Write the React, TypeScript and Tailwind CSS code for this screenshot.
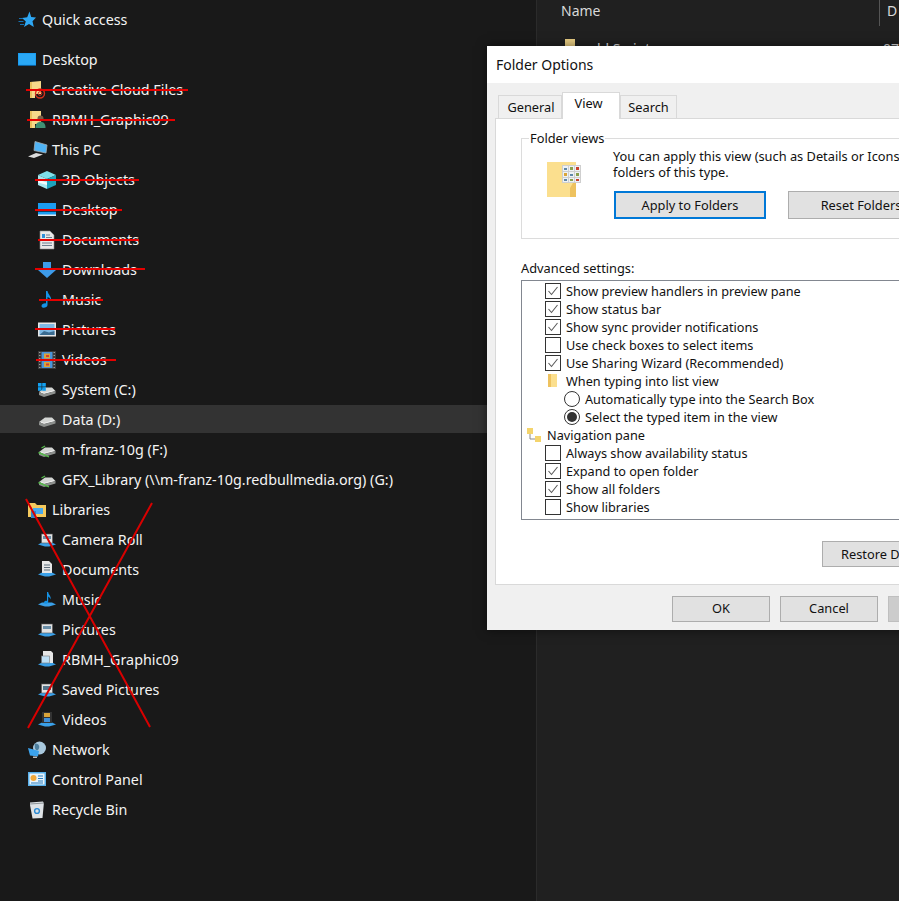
const FONT = "font-['Noto_Sans','Open_Sans',sans-serif]";

type IconName =
  | "star" | "desktop" | "folderCloud" | "folderUser" | "pc" | "cube" | "desktopSmall" | "doc" | "download"
  | "music" | "pictures" | "videos" | "driveWin" | "drive" | "driveNet" | "libraries" | "libRoll" | "libDoc"
  | "libMusic" | "libPic" | "libUser" | "libSaved" | "libVideo" | "network" | "control" | "bin";

function Tray() {
  return <path d="M0 13.5 L4 11.5 L14 11.5 L18 13.5 L11 15.5 L7 15.5 Z" fill="#3aa0e8" />;
}

function Drive() {
  return (
    <>
      <path d="M1 11 L7 6.5 L14 6.5 L17.5 10 L6 13 Z" fill="#d4d6d4" />
      <path d="M1 11 L6 13 L17.5 10 V12.5 L6 16 L1 14 Z" fill="#8d908e" />
      <path d="M3 11.2 L6.2 12.2 L16 9.6" stroke="#f4f4f4" strokeWidth="0.8" fill="none" />
    </>
  );
}

function Icon({ name }: { name: IconName }) {
  const body = () => {
    switch (name) {
      case "star":
        return (
          <>
            <path d="M11.5 0.5 L13.2 6 L18 6.5 L14.5 10.2 L15.8 16 L11 13 L6 16 L7.8 10.5 L4 7 L9.2 6.2 Z" fill="#2ea7f3" />
            <path d="M1 7.5h4M0.5 10.5h5M2 13.5h4" stroke="#1673b5" strokeWidth="1" />
          </>
        );
      case "desktop":
        return (
          <>
            <rect x="0" y="2" width="18" height="13" fill="#1a9cf0" />
            <rect x="0.8" y="2.8" width="16.4" height="10.8" fill="#2aa8f5" />
            <rect x="0" y="14" width="18" height="1" fill="#0b5f9e" />
          </>
        );
      case "folderCloud":
        return (
          <>
            <path d="M2 1 L13 0 L13 13 L7 13 L7 17 L2 17 Z" fill="#f6d98a" />
            <rect x="2" y="1" width="2" height="16" fill="#e9c05e" />
            <circle cx="12" cy="12.5" r="4.5" fill="none" stroke="#d8321e" strokeWidth="1.4" />
            <circle cx="12" cy="12.5" r="1.8" fill="none" stroke="#d8321e" strokeWidth="1" />
          </>
        );
      case "folderUser":
        return (
          <>
            <path d="M2 0 L13 0 L13 13 L7 13 L7 17 L2 17 Z" fill="#f6d98a" />
            <rect x="2" y="0" width="2" height="17" fill="#e9c05e" />
            <circle cx="12.5" cy="7.5" r="3" fill="#7b5f48" />
            <path d="M7.5 17 C7.5 12 9.5 11 12.5 11 C15.5 11 17.5 12 17.5 17 Z" fill="#3f8f73" />
          </>
        );
      case "pc":
        return (
          <>
            <path d="M7 0.5 L19 4 L18 12 L6 9.5 Z" fill="#4fb3f5" stroke="#a5adb2" strokeWidth="0.8" />
            <path d="M0 15.5 L8 12 L15 13.5 L6 17 Z" fill="#dcdcdc" />
          </>
        );
      case "cube":
        return (
          <>
            <path d="M9 0 L18 4 L9 8 L0 4 Z" fill="#7ee0ea" />
            <path d="M0 4 L9 8 L9 18 L0 14 Z" fill="#a8e6ee" />
            <path d="M0 8.5 L9 11.5 L9 14 L0 11.5 Z" fill="#f2fbfc" />
            <path d="M18 4 L9 8 L9 18 L18 14 Z" fill="#1ea3bd" />
          </>
        );
      case "desktopSmall":
        return (
          <>
            <rect x="0" y="2" width="18" height="13" fill="#1a9cf0" />
            <rect x="0" y="9" width="18" height="2" fill="#0c3f66" />
            <rect x="0" y="13.5" width="18" height="1.5" fill="#dfe8ee" />
          </>
        );
      case "doc":
        return (
          <>
            <path d="M2 0 L12 0 L16 4 L16 18 L2 18 Z" fill="#e8e8e8" stroke="#8a8a8a" strokeWidth="0.6" />
            <path d="M8 4h4M8 6.5h6M4 9.5h10M4 12h10M4 14.5h10" stroke="#6d7f8f" strokeWidth="1" />
            <rect x="4" y="3" width="3" height="4" fill="#2f8fd8" />
          </>
        );
      case "download":
        return <path d="M5 1 H13 V9 H18 L9 17 L0 9 H5 Z" fill="#3d9be9" />;
      case "music":
        return <path d="M8 0 H9.5 C10 4 14 5 13 10 C12.5 7.5 11 6.5 9.5 6 V14 C9.5 17 3.5 18 3.5 15 C3.5 13 6.5 12 8 12.5 Z" fill="#1593e6" />;
      case "pictures":
        return (
          <>
            <rect x="0" y="1.5" width="18" height="14" fill="#e6e6e6" />
            <rect x="1.5" y="3" width="15" height="11" fill="#7db8e4" />
            <path d="M1.5 14 L6 10 L11 11.5 L16.5 10 V14 Z" fill="#3a6b90" />
          </>
        );
      case "videos":
        return (
          <>
            <rect x="0" y="0" width="18" height="18" fill="#3a3a3a" />
            <path d="M1 1.5h1.5M1 4.5h1.5M1 7.5h1.5M1 10.5h1.5M1 13.5h1.5M1 16.5h1.5M15.5 1.5h1.5M15.5 4.5h1.5M15.5 7.5h1.5M15.5 10.5h1.5M15.5 13.5h1.5M15.5 16.5h1.5" stroke="#9a9a9a" strokeWidth="1" />
            <rect x="3.5" y="1" width="11" height="7.5" fill="#4a94d8" />
            <rect x="3.5" y="9.5" width="11" height="7.5" fill="#4a94d8" />
            <rect x="6" y="2.5" width="6" height="5" fill="#d9a43a" />
            <rect x="6" y="11" width="6" height="5" fill="#d9a43a" />
            <rect x="8" y="4" width="3" height="2" fill="#d6402e" />
            <rect x="8" y="12.5" width="3" height="2" fill="#d6402e" />
          </>
        );
      case "driveWin":
        return (
          <>
            <Drive />
            <g fill="#12a0f0">
              <rect x="0" y="2" width="3.6" height="3.6" />
              <rect x="4.2" y="2" width="3.6" height="3.6" />
              <rect x="0" y="6.2" width="3.6" height="3.6" />
              <rect x="4.2" y="6.2" width="3.6" height="3.6" />
            </g>
          </>
        );
      case "drive":
        return <Drive />;
      case "driveNet":
        return (
          <>
            <Drive />
            <path d="M0.5 11.5 L11 15.8" stroke="#55b94a" strokeWidth="1.4" fill="none" />
            <path d="M3.5 7 L7 5" stroke="#55b94a" strokeWidth="1.2" fill="none" />
          </>
        );
      case "libraries":
        return (
          <>
            <path d="M0 2 H7 L9 4 H18 V16 H0 Z" fill="#f4c95d" />
            <rect x="5" y="7" width="10" height="6" fill="#48a9ee" />
            <rect x="3" y="10" width="5" height="7" fill="#2f86c9" />
          </>
        );
      case "libRoll":
      case "libPic":
        return (
          <>
            <Tray />
            <rect x="3.5" y="3" width="11" height="9" fill="#e2e2e2" stroke="#555" strokeWidth="0.6" />
            <rect x="5" y="5" width="8" height="3" fill="#6b8fa8" />
          </>
        );
      case "libDoc":
        return (
          <>
            <Tray />
            <path d="M4 0 H11 L14 3 V12 H4 Z" fill="#e6e6e6" />
            <path d="M6 4h6M6 6.5h6M6 9h6" stroke="#5b6c7a" strokeWidth="1" />
          </>
        );
      case "libMusic":
        return (
          <>
            <Tray />
            <path d="M9 1 H10.2 C10.5 4 13.5 5 12.5 8.5 C12 6.5 11 6 10.2 5.5 V11 C10.2 13 6 13.5 6 11.5 C6 10 8 9.5 9 10 Z" fill="#1593e6" />
          </>
        );
      case "libUser":
        return (
          <>
            <Tray />
            <path d="M5 0 H13 L15 2 V12 H5 Z" fill="#e6e6e6" />
            <rect x="3.5" y="5" width="8" height="7" fill="#bfe0f5" stroke="#777" strokeWidth="0.6" />
          </>
        );
      case "libSaved":
        return (
          <>
            <Tray />
            <rect x="3.5" y="3" width="11" height="9" fill="#e2e2e2" stroke="#555" strokeWidth="0.6" />
            <rect x="5" y="5" width="8" height="4" fill="#55748a" />
          </>
        );
      case "libVideo":
        return (
          <>
            <Tray />
            <rect x="4" y="1" width="10" height="11" fill="#333" />
            <rect x="6" y="2" width="6" height="4" fill="#d9a43a" />
            <rect x="6" y="7" width="6" height="4" fill="#3f8fd8" />
          </>
        );
      case "network":
        return (
          <>
            <circle cx="11.5" cy="7" r="6.5" fill="#a8c8dd" />
            <path d="M7 2.5 C10 2 13 5 10 9 C8 10 6 8 7 2.5 Z" fill="#4d7f9e" />
            <path d="M0 7 L11 10 L10 15.5 L2 14.5 Z" fill="#3ba3ee" />
            <rect x="5" y="15.5" width="4" height="1.5" fill="#bbb" />
          </>
        );
      case "control":
        return (
          <>
            <rect x="0" y="1" width="18" height="14" fill="#59b0ea" />
            <rect x="1.5" y="2.5" width="15" height="11" fill="#eaf4fb" />
            <circle cx="5.5" cy="7" r="3" fill="#f2a93b" />
            <path d="M10 5h5M10 7.5h5M10 10h5M3 12h12" stroke="#2b7fc0" strokeWidth="1.2" />
          </>
        );
      case "bin":
        return (
          <>
            <path d="M2 1.5 L15 0.5 L15.8 3 L14.5 17 L4.5 17.5 L2 4 Z" fill="#dfe3e6" />
            <path d="M2 3 L16 2" stroke="#8f9599" strokeWidth="1.2" />
            <circle cx="9" cy="10" r="2.4" fill="none" stroke="#2a8ad4" strokeWidth="1.4" />
          </>
        );
    }
  };
  return (
    <svg viewBox="0 0 18 18" className="w-[18px] h-[18px] shrink-0 overflow-visible">
      {body()}
    </svg>
  );
}

type NavRow = {
  label: string;
  icon: IconName;
  level: 0 | 1 | 2;
  strike?: string;
  selected?: boolean;
};

const navRows: NavRow[] = [
  { label: "Creative Cloud Files", icon: "folderCloud", level: 1, strike: "top-[14px] left-[26px] w-[162px]" },
  { label: "RBMH_Graphic09", icon: "folderUser", level: 1, strike: "top-[14px] left-[27px] w-[148px]" },
  { label: "This PC", icon: "pc", level: 1 },
  { label: "3D Objects", icon: "cube", level: 2, strike: "top-[14px] left-[35px] w-[104px]" },
  { label: "Desktop", icon: "desktopSmall", level: 2, strike: "top-[14px] left-[35px] w-[87px]" },
  { label: "Documents", icon: "doc", level: 2, strike: "top-[14px] left-[38px] w-[101px]" },
  { label: "Downloads", icon: "download", level: 2, strike: "top-[13px] left-[35px] w-[110px]" },
  { label: "Music", icon: "music", level: 2, strike: "top-[14px] left-[39px] w-[64px]" },
  { label: "Pictures", icon: "pictures", level: 2, strike: "top-[13px] left-[35px] w-[80px]" },
  { label: "Videos", icon: "videos", level: 2, strike: "top-[14px] left-[36px] w-[80px]" },
  { label: "System (C:)", icon: "driveWin", level: 2 },
  { label: "Data (D:)", icon: "drive", level: 2, selected: true },
  { label: "m-franz-10g (F:)", icon: "driveNet", level: 2 },
  { label: "GFX_Library (\\\\m-franz-10g.redbullmedia.org) (G:)", icon: "driveNet", level: 2 },
  { label: "Libraries", icon: "libraries", level: 1 },
  { label: "Camera Roll", icon: "libRoll", level: 2 },
  { label: "Documents", icon: "libDoc", level: 2 },
  { label: "Music", icon: "libMusic", level: 2 },
  { label: "Pictures", icon: "libPic", level: 2 },
  { label: "RBMH_Graphic09", icon: "libUser", level: 2 },
  { label: "Saved Pictures", icon: "libSaved", level: 2 },
  { label: "Videos", icon: "libVideo", level: 2 },
  { label: "Network", icon: "network", level: 1 },
  { label: "Control Panel", icon: "control", level: 1 },
  { label: "Recycle Bin", icon: "bin", level: 1 },
];

function Row({ row }: { row: NavRow }) {
  const indent = row.level === 0 ? "pl-[18px]" : row.level === 1 ? "pl-[28px]" : "pl-[38px]";
  return (
    <div className={`relative h-[30px] flex items-center ${indent}`}>
      {row.selected && <div className="absolute inset-x-0 top-0 bottom-[2px] bg-[#333333]" />}
      <div className="relative flex items-center gap-[6px] text-[14.3px] text-[#f4f4f4] whitespace-nowrap">
        <Icon name={row.icon} />
        <span>{row.label}</span>
      </div>
      {row.strike && <div className={`absolute h-[2px] bg-[#e60000] ${row.strike}`} />}
    </div>
  );
}

function Sidebar() {
  return (
    <div className="relative w-[537px] shrink-0 bg-[#191919] pt-[5px] border-r border-[#2b2b2b]">
      <div className="h-[30px] flex items-center gap-[6px] pl-[18px] text-[14.3px] text-[#f4f4f4]">
        <Icon name="star" />
        <span>Quick access</span>
      </div>
      <div className="h-[30px] mt-[10px] flex items-center gap-[6px] pl-[18px] text-[14.3px] text-[#f4f4f4]">
        <Icon name="desktop" />
        <span>Desktop</span>
      </div>
      {navRows.map((r, i) => (
        <Row key={i} row={r} />
      ))}
      <svg className="absolute left-0 top-0 w-[200px] h-[760px] pointer-events-none" viewBox="0 0 200 760">
        <path d="M26 499 L150 727 M152 503 L28 728" stroke="#d80000" strokeWidth="2" fill="none" />
      </svg>
    </div>
  );
}

function Check({ on }: { on?: boolean }) {
  return (
    <div className="w-4 h-4 border border-[#333333] bg-white shrink-0">
      {on && (
        <svg viewBox="0 0 14 14" className="w-[14px] h-[14px]">
          <path d="M2.5 7 L5.5 10.5 L11.5 3" stroke="#5a5a5a" strokeWidth="1.1" fill="none" />
        </svg>
      )}
    </div>
  );
}

function Radio({ on }: { on?: boolean }) {
  return (
    <div className="w-4 h-4 rounded-full border border-[#333333] bg-white shrink-0 flex items-center justify-center">
      {on && <div className="w-[10px] h-[10px] rounded-full bg-[#333333]" />}
    </div>
  );
}

function CheckRow({ on, label }: { on?: boolean; label: string }) {
  return (
    <div className="h-[18px] flex items-center pl-[23px] gap-[5px]">
      <Check on={on} />
      <span className="translate-y-px">{label}</span>
    </div>
  );
}

function RadioRow({ on, label }: { on?: boolean; label: string }) {
  return (
    <div className="h-[18px] flex items-center pl-[42px] gap-[5px]">
      <Radio on={on} />
      <span className="translate-y-px">{label}</span>
    </div>
  );
}

function Btn({ label, className }: { label: string; className: string }) {
  return (
    <div className={`flex items-center justify-center bg-[#e1e1e1] border border-[#adadad] whitespace-nowrap ${className}`}>
      {label}
    </div>
  );
}

function FolderViewsIcon() {
  return (
    <svg viewBox="0 0 36 36" className="w-9 h-9 shrink-0">
      <path d="M0 0 H29 V35 H0 Z" fill="#fbdf8e" />
      <path d="M23 35 V26 L26 21 L29 21 V35 Z" fill="#eec25f" />
      <rect x="15" y="3" width="19" height="18" fill="#cfcfcf" />
      <g>
        <rect x="16" y="4" width="5" height="5" fill="#eef2f5" />
        <rect x="22" y="4" width="5" height="5" fill="#eef2f5" />
        <rect x="28" y="4" width="5" height="5" fill="#eef2f5" />
        <rect x="16" y="10" width="5" height="5" fill="#eef2f5" />
        <rect x="22" y="10" width="5" height="5" fill="#eef2f5" />
        <rect x="28" y="10" width="5" height="5" fill="#eef2f5" />
        <rect x="16" y="16" width="5" height="4" fill="#eef2f5" />
        <rect x="22" y="16" width="5" height="4" fill="#eef2f5" />
        <rect x="28" y="16" width="5" height="4" fill="#eef2f5" />
        <rect x="17" y="6" width="3" height="2" fill="#5f88a8" />
        <rect x="23" y="5" width="3" height="3" fill="#8aa04c" />
        <rect x="29" y="5" width="3" height="3" fill="#c9402c" />
        <rect x="17" y="11" width="3" height="3" fill="#d9a43a" />
        <rect x="23" y="12" width="3" height="2" fill="#5f88a8" />
        <rect x="29" y="11" width="3" height="3" fill="#8aa04c" />
        <rect x="17" y="17" width="3" height="2" fill="#5f88a8" />
        <rect x="23" y="17" width="3" height="2" fill="#8aa04c" />
        <rect x="29" y="17" width="3" height="2" fill="#c9402c" />
      </g>
    </svg>
  );
}

function Dialog() {
  return (
    <div className={`absolute left-[487px] top-[46px] w-[560px] h-[584px] bg-[#f0f0f0] flex flex-col text-[12.8px] text-[#111111] shadow-[0_0_10px_rgba(0,0,0,0.5)] ${FONT}`}>
      <div className="h-[37px] shrink-0 bg-white flex items-center pl-[9px] text-[14px]">Folder Options</div>

      <div className="h-[35px] shrink-0 pl-[11px] flex items-end relative">
        <div className="w-[64px] h-[23px] bg-[#f0f0f0] border border-b-0 border-[#d9d9d9] flex items-center justify-center pt-[2px] pl-[2px]">General</div>
        <div className="relative z-10 w-[58px] h-[27px] -mb-px bg-white border border-b-0 border-[#d9d9d9] flex items-center justify-center pb-[5px] pr-[5px]">View</div>
        <div className="w-[57px] h-[23px] bg-[#f0f0f0] border border-b-0 border-[#d9d9d9] flex items-center justify-center pt-[2px]">Search</div>
      </div>

      <div className="ml-[8px] w-[600px] h-[467px] shrink-0 bg-white border border-[#d9d9d9] pl-[25px] pt-[19px]">
        {/* Folder views group */}
        <div className="relative w-[500px] h-[101px] border border-[#dcdcdc] pl-[91px] pt-[9px]">
          <span className="absolute left-[7px] -top-[10px] bg-white px-[1px] leading-[18px]">Folder views</span>
          <div className="absolute left-[25px] top-[23px]">
            <FolderViewsIcon />
          </div>
          <div className="leading-[16px] whitespace-nowrap">
            You can apply this view (such as Details or Icons) to all
            <br />
            folders of this type.
          </div>
          <div className="flex gap-[22px] mt-[11px] ml-px">
            <Btn label="Apply to Folders" className="w-[152px] h-[28px] pt-[2px] !border-2 !border-[#0078d7]" />
            <Btn label="Reset Folders" className="w-[152px] h-[28px] pt-[2px] pr-[6px]" />
          </div>
        </div>

        <div className="mt-[20px] leading-[18px]">Advanced settings:</div>
        <div className="mt-[3px] w-[500px] h-[240px] border border-[#828790] pt-[1px] whitespace-nowrap text-[12.7px]">
          <CheckRow on label="Show preview handlers in preview pane" />
          <CheckRow on label="Show status bar" />
          <CheckRow on label="Show sync provider notifications" />
          <CheckRow label="Use check boxes to select items" />
          <CheckRow on label="Use Sharing Wizard (Recommended)" />
          <div className="h-[18px] flex items-center pl-[25px] gap-[7px]">
            <svg viewBox="0 0 12 14" className="w-[12px] h-[14px]">
              <path d="M1 0 H10 V13 H1 Z" fill="#fbdf8e" />
              <path d="M1 0 H4 V13 H1 Z" fill="#eec25f" />
            </svg>
            <span className="translate-y-px">When typing into list view</span>
          </div>
          <RadioRow label="Automatically type into the Search Box" />
          <RadioRow on label="Select the typed item in the view" />
          <div className="h-[18px] flex items-center pl-[5px] gap-[6px]">
            <svg viewBox="0 0 14 14" className="w-[14px] h-[14px]">
              <path d="M3 6 V11 H8" stroke="#888" fill="none" />
              <rect x="0" y="0" width="6" height="6" fill="#f4d46c" />
              <rect x="8" y="8" width="6" height="6" fill="#f4d46c" />
            </svg>
            <span className="translate-y-px">Navigation pane</span>
          </div>
          <CheckRow label="Always show availability status" />
          <CheckRow on label="Expand to open folder" />
          <CheckRow on label="Show all folders" />
          <CheckRow label="Show libraries" />
        </div>
        <div className="mt-[21px] ml-[301px] w-[200px] flex">
          <Btn label="Restore Defaults" className="w-[152px] h-[26px] justify-start pl-[18px] pt-[2px]" />
        </div>
      </div>

      <div className="flex gap-[10px] pl-[185px] pt-[11px]">
        <Btn label="OK" className="w-[98px] h-[26px] shrink-0" />
        <Btn label="Cancel" className="w-[98px] h-[26px] shrink-0" />
        <Btn label="" className="w-[98px] h-[26px] shrink-0 !bg-[#cccccc] !border-[#bfbfbf]" />
      </div>
    </div>
  );
}

export default function App() {
  return (
    <div className={`relative flex w-[899px] h-[901px] overflow-hidden bg-[#202020] ${FONT}`}>
      <Sidebar />

      {/* Right pane, mostly behind the dialog */}
      <div className="flex-1 min-w-0 text-[14px] text-[#d8d8d8] whitespace-nowrap">
        <div className="h-[26px] flex pl-[24px]">
          <span className="w-[318px] pt-[1px] leading-[20px]">Name</span>
          <div className="w-px h-[26px] bg-[#555555]" />
          <span className="pl-[7px] pt-[1px] leading-[20px]">D</span>
        </div>
        <div className="mt-[13px] flex items-start pl-[28px]">
          <div className="w-[11px] h-[8px] bg-[#e8cd83]" />
          <span className="ml-[13px] leading-[20px]">old Scripts</span>
          <span className="ml-[226px] leading-[20px]">07</span>
        </div>
      </div>

      <Dialog />
    </div>
  );
}
